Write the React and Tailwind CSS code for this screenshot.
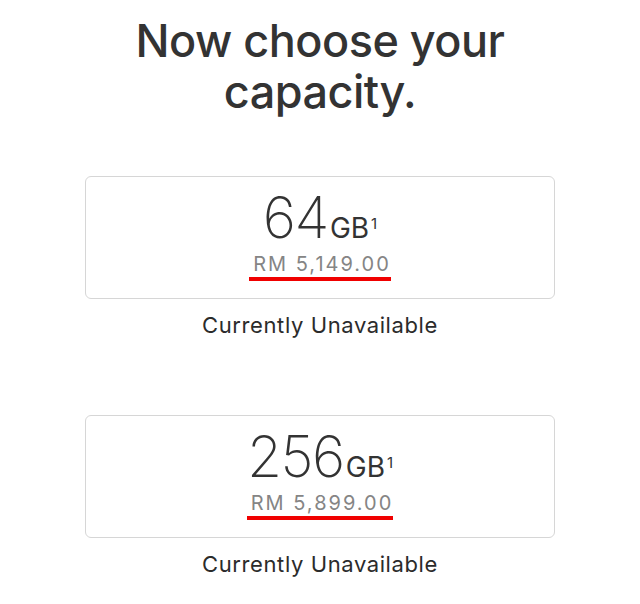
import React from 'react'

const options = [
  { size: '64', price: 'RM 5,149.00' },
  { size: '256', price: 'RM 5,899.00' },
]

const CapacityCard = ({ size, price, first }) => (
  <div className={`flex flex-col items-center ${first ? 'mt-[59px]' : 'mt-[79px]'}`}>
    <div className="w-[470px] h-[123px] border border-[#d6d6d6] rounded-[6px] flex flex-col items-center pt-[13px]">
      <div className="flex items-baseline text-[#333333] h-[56px]">
        <span className="text-[57px] leading-[56px] font-extralight tracking-[-1.5px]">{size}</span>
        <span className="text-[28px] leading-[28px] font-normal ml-[2px]">GB</span>
        <span className="text-[15px] leading-[15px] font-normal self-start mt-[26px] ml-[2px]">1</span>
      </div>
      <div className="mt-[8px] flex flex-col items-stretch">
        <span className="text-[20px] leading-[20px] text-[#858585] tracking-[2px] pl-[4px] pr-[0px]">{price}</span>
        <div className="mt-[3px] h-[4px] bg-[#f00000]" />
      </div>
    </div>
    <p className="mt-[15px] text-[22px] leading-[22px] text-[#2b2b2b] tracking-[0.6px]">Currently Unavailable</p>
  </div>
)

export default function App() {
  return (
    <div className="w-[640px] h-[604px] bg-white overflow-hidden flex flex-col items-center pt-[15px]" style={{ fontFamily: 'Inter, "Liberation Sans", sans-serif' }}>
      <h1 className="text-[45px] leading-[51px] font-medium text-[#333333] text-center tracking-[-0.5px]">
        Now choose your<br />capacity.
      </h1>
      {options.map((o, i) => (
        <CapacityCard key={o.size} size={o.size} price={o.price} first={i === 0} />
      ))}
    </div>
  )
}
